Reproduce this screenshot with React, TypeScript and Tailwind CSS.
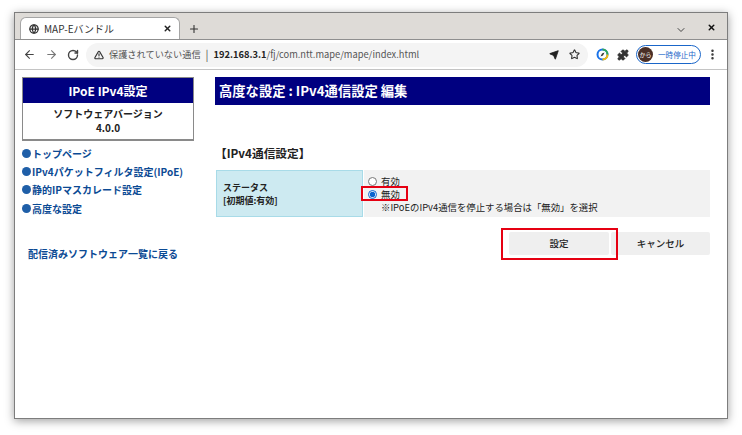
import { ArrowLeft, ArrowRight, ChevronDown, EllipsisVertical, Globe, Plus, Puzzle, RotateCw, Send, Star, TriangleAlert, X } from "lucide-react";

const font = { fontFamily: '"Noto Sans CJK JP", "Noto Sans", sans-serif' };

function SideLink({ label }: { label: string }) {
  return (
    <div className="flex h-[18.4px] items-center text-[10px] font-bold text-[#0b4a94]">
      <span className="mr-px h-[9px] w-[9px] rounded-full bg-[#1f5fa8]" />
      {label}
    </div>
  );
}

export default function App() {
  return (
    <div className="h-[435px] w-[742px] overflow-hidden bg-white pl-[14px] pt-[12px]" style={font}>
      <div className="flex h-[407px] w-[714px] flex-col border border-[#7d7d7d] bg-white shadow-[0_2px_9px_rgba(0,0,0,0.38)]">
        {/* tab strip */}
        <div className="flex h-[27px] shrink-0 items-end border-b border-[#8f8f8f] bg-[#dedbd7] pl-[5px]">
          <div className="flex h-[22px] w-[160px] items-center rounded-t-[6px] border border-b-0 border-[#a5a5a5] bg-white pl-[8px] pr-[7px]">
            <Globe size={10} strokeWidth={3} className="text-[#333]" />
            <span className="ml-[5px] flex-1 text-[10px] text-[#333]">MAP-Eバンドル</span>
            <X size={9} strokeWidth={4} className="text-[#222]" />
          </div>
          <Plus size={12} strokeWidth={2.2} className="mb-[4px] ml-[8px] text-[#333]" />
          <div className="flex-1" />
          <ChevronDown size={12} strokeWidth={2} className="mb-[3px] mr-[20px] text-[#444]" />
          <X size={9} strokeWidth={4} className="mb-[7px] mr-[11px] text-[#111]" />
        </div>
        {/* toolbar */}
        <div className="flex h-[30px] shrink-0 items-center border-b border-[#c4c4c4] bg-white pl-[8px] pr-[8px]">
          <ArrowLeft size={13} strokeWidth={2} className="text-[#444]" />
          <ArrowRight size={13} strokeWidth={2} className="ml-[9px] text-[#777]" />
          <RotateCw size={12} strokeWidth={2.8} className="ml-[9px] text-[#444]" />
          <div className="ml-[7px] flex h-[24px] w-[502px] shrink-0 items-center rounded-full bg-[#f4f4f4] pl-[8px] pr-[8px]">
            <TriangleAlert size={10} strokeWidth={2.8} className="text-[#333]" />
            <span className="ml-[5px] text-[9.2px] text-[#555]">保護されていない通信</span>
            <span className="mx-[5px] text-[11px] text-[#555]">|</span>
            <span className="text-[9.3px] font-bold text-[#222]">192.168.3.1</span>
            <span className="flex-1 text-[9.3px] text-[#555]">/fj/com.ntt.mape/mape/index.html</span>
            <Send size={10} fill="#222" className="text-[#222]" />
            <Star size={11} strokeWidth={2.4} className="ml-[10px] text-[#333]" />
          </div>
          <svg width="13" height="13" viewBox="0 0 13 13" className="ml-[8px] shrink-0">
            <circle cx="6.5" cy="6.5" r="5" fill="none" stroke="#1a73e8" strokeWidth="2" />
            <path d="M6.5 1.5a5 5 0 0 1 5 5" fill="none" stroke="#34a853" strokeWidth="2" />
            <path d="M11.5 6.5a5 5 0 0 1-5 5" fill="none" stroke="#fbbc04" strokeWidth="2" />
            <path d="M4.5 8.5 6 5.5 8.5 4.5 7 7.5Z" fill="#333" />
          </svg>
          <Puzzle size={12} fill="#333" className="ml-[8px] shrink-0 text-[#333]" />
          <div className="ml-[7px] flex h-[19px] w-[65px] shrink-0 items-center rounded-full border border-[#1a66c9] pl-px">
            <span className="flex h-[15px] w-[15px] shrink-0 items-center justify-center rounded-full bg-[#4a2f26] text-[6px] leading-none whitespace-nowrap text-white">から</span>
            <span className="ml-[5px] text-[7.6px] whitespace-nowrap text-[#1a66c9]">一時停止中</span>
          </div>
          <EllipsisVertical size={13} strokeWidth={2.6} className="ml-[5px] shrink-0 text-[#333]" />
        </div>
        {/* page */}
        <div className="flex flex-1 pl-[7px] pt-[7px]">
          <div className="w-[172px] shrink-0">
            <div className="border border-b-2 border-[#8a8a8a]">
              <div className="flex h-[25px] items-center justify-center bg-[#000080] text-[12px] font-bold text-white">IPoE IPv4設定</div>
              <div className="flex h-[36px] flex-col items-center justify-center text-[10px] font-bold leading-[14px] text-[#222]">
                <span>ソフトウェアバージョン</span>
                <span>4.0.0</span>
              </div>
            </div>
            <div className="mt-[3px]">
              <SideLink label="トップページ" />
              <SideLink label="IPv4パケットフィルタ設定(IPoE)" />
              <SideLink label="静的IPマスカレード設定" />
              <SideLink label="高度な設定" />
            </div>
            <div className="ml-[6px] mt-[28px] text-[10px] font-bold text-[#0b4a94]">配信済みソフトウェア一覧に戻る</div>
          </div>
          <div className="ml-[21px] w-[495px]">
            <div className="flex h-[28px] items-center bg-[#000080] pl-[4px] text-[13.3px] font-bold text-white">高度な設定 : IPv4通信設定 編集</div>
            <div className="mt-[39px] h-[18px] text-[11.7px] font-bold leading-[18px] text-[#222]">【IPv4通信設定】</div>
            <div className="mt-[8px] flex h-[47px] text-[#222]">
              <div className="ml-px flex w-[147px] flex-col justify-center border border-[#a8dbe8] bg-[#cdeaf1] pl-[6px] text-[9px] font-bold leading-[13px]">
                <span>ステータス</span>
                <span>[初期値:有効]</span>
              </div>
              <div className="ml-px flex w-[346px] flex-col justify-center bg-[#f2f2f2] pl-[4px] pt-[1px] text-[9.4px] leading-[13px]">
                <label className="flex items-center">
                  <input type="radio" name="status" className="m-0 h-[9px] w-[9px]" />
                  <span className="ml-[4px]">有効</span>
                </label>
                <label className="relative flex items-center">
                  <input type="radio" name="status" defaultChecked className="m-0 h-[9px] w-[9px] accent-[#0b63ce]" />
                  <span className="ml-[4px]">無効</span>
                  <span className="absolute left-[-7px] top-[-2px] h-[15px] w-[47px] border-2 border-[#e60012]" />
                </label>
                <span className="ml-[13px]">※IPoEのIPv4通信を停止する場合は「無効」を選択</span>
              </div>
            </div>
            <div className="mt-[15px] flex h-[23px] justify-end text-[9.5px] font-medium text-[#222]">
              <div className="relative flex w-[100px] items-center justify-center rounded-[2px] bg-[#efefef]">
                設定
                <span className="absolute left-[-8px] top-[-4px] h-[32px] w-[117px] border-2 border-[#e60012]" />
              </div>
              <div className="ml-[2px] flex w-[99px] items-center justify-center rounded-[2px] bg-[#efefef]">キャンセル</div>
            </div>
          </div>
        </div>
      </div>
    </div>
  );
}
